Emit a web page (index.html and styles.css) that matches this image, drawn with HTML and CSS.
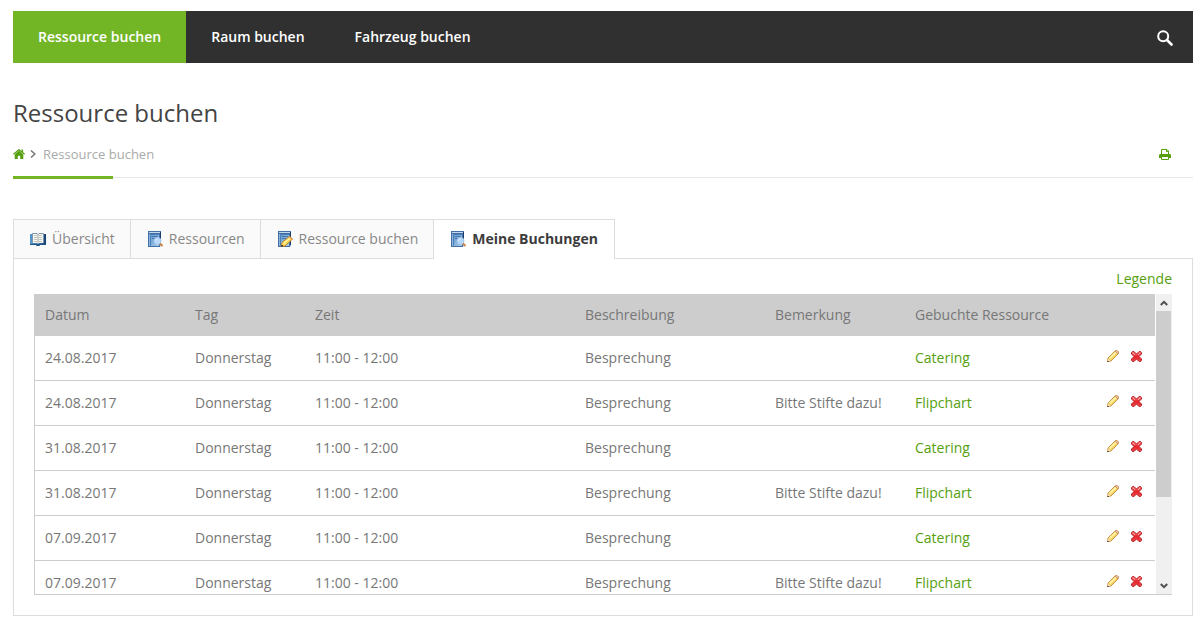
FILE: index.html
```html
<!DOCTYPE html>
<html lang="de">
<head>
<meta charset="utf-8">
<title>Ressource buchen</title>
<link rel="stylesheet" href="styles.css">
</head>
<body>
<svg class="sprite" aria-hidden="true">
  <defs>
    <linearGradient id="book-blue" x1="0" y1="0" x2="1" y2="1">
      <stop offset="0" stop-color="#5f97cc"/><stop offset="1" stop-color="#a9cbea"/>
    </linearGradient>
    <linearGradient id="cover-blue" x1="0" y1="0" x2="1" y2="0">
      <stop offset="0" stop-color="#5a9bd0"/><stop offset="1" stop-color="#173f70"/>
    </linearGradient>
    <linearGradient id="red-x" x1="0" y1="0" x2="0" y2="1">
      <stop offset="0" stop-color="#f47a7a"/><stop offset="0.5" stop-color="#e8242c"/><stop offset="1" stop-color="#e84848"/>
    </linearGradient>
  </defs>
  <symbol id="open-book" viewBox="0 0 16 16">
    <path d="M0 3h2v9h12V3h2v11H10l-1 1H7l-1-1H0z" fill="url(#cover-blue)"/>
    <path d="M0 13h16v1h-6l-1 1H7l-1-1H0z" fill="#1c568c"/>
    <path d="M2 2h5l1 1 1-1h5v10H9l-1 1-1-1H2z" fill="#f6f6f3"/>
    <path d="M2.500 12V2.500H7l1 1 1-1h4.500V12" fill="none" stroke="#7d96ad"/>
    <path d="M8 3v10" stroke="#a9a9a3" stroke-width="1"/>
    <path d="M4 4.500h3M4 6.500h3M4 8.500h3M9 4.500h3M9 6.500h3M9 8.500h3M4 10.500h3M9 10.500h3" stroke="#c4c4bf"/>
  </symbol>
  <symbol id="book" viewBox="0 0 16 16">
    <path d="M1 0h13v13l-1 3H1z" fill="#416fa6"/>
    <path d="M2 1h11v1H2z" fill="#c3d9ee"/>
    <path d="M2 3h1v12H2z" fill="#8eb4da"/>
    <path d="M3 3h9v12H3z" fill="url(#book-blue)"/>
    <path d="M3.500 14.500v-11h9" fill="none" stroke="#4a7fb8"/>
    <path d="M13.500 1v13" stroke="#1d3d69"/>
    <path d="M5 5.500h6M5 7.500h4" stroke="#4677ae"/>
  </symbol>
  <symbol id="book-search" viewBox="0 0 16 16">
    <use href="#book" width="16" height="16"/>
    <circle cx="10.500" cy="10" r="3.500" fill="#b9d8fa" stroke="#a3c8ee"/>
    <path d="M8.500 9.500a2 2 0 0 1 2-1.500" fill="none" stroke="#e4f2ff"/>
    <path d="M13 12.500l2.500 2.500" stroke="#d08c48" stroke-width="2"/>
  </symbol>
  <symbol id="book-edit" viewBox="0 0 16 16">
    <use href="#book" width="16" height="16"/>
    <path d="M4 15.500l1-4 7.500-6 3 2.500-7.500 7z" fill="#ffd95a" stroke="#c88624"/>
    <path d="M6.500 12.500L13 7" stroke="#fff3a5" stroke-width="1.500"/>
    <path d="M12 5.500l3.500 3" stroke="#df9b5c" stroke-width="1.500"/>
    <path d="M4 14h2v2H4z" fill="#5e4c36"/>
  </symbol>
  <symbol id="pencil" viewBox="0 0 12 12">
    <path d="M0.500 11.500L1 8 8 1 10 0.500 11.500 2 11 4 4 11z" fill="#f5d35d" stroke="#c8944a"/>
    <path d="M2.500 8.500L9 2.500" stroke="#fff0a2" stroke-width="2"/>
    <path d="M8 1l2-0.500L11.500 2 11 4z" fill="#f4d3b8" stroke="#cf9468"/>
    <path d="M1 8.500l2.500 2.500-3 0.500z" fill="#f3dfc0"/>
    <path d="M0 11h2v1H0z" fill="#705534"/>
  </symbol>
  <symbol id="delete" viewBox="0 0 11 11">
    <path d="M0.500 1.500l1-1H3l2.500 2.500L8 0.500h1.500l1 1V3L8 5.500l2.500 2.500v1.500l-1 1H8L5.500 8 3 10.500H1.500l-1-1V8L3 5.500 0.500 3z" fill="url(#red-x)" stroke="#b8292f"/>
    <path d="M2 2l2 2M9 2L7 4" stroke="#ffa5a2"/>
  </symbol>
</svg>

<div class="page">
  <header class="topbar">
    <nav class="mainnav">
      <a class="mainnav-link is-active" href="#">Ressource buchen</a>
      <a class="mainnav-link" href="#">Raum buchen</a>
      <a class="mainnav-link" href="#">Fahrzeug buchen</a>
    </nav>
    <button class="search" type="button" aria-label="Suchen">
      <svg width="16" height="16" viewBox="0 0 16 16"><circle cx="6.200" cy="6.200" r="5" fill="none" stroke="#fff" stroke-width="2"/><path d="M10 10l4.500 4.500" stroke="#fff" stroke-width="2.600" stroke-linecap="round"/></svg>
    </button>
  </header>

  <h1 class="title">Ressource buchen</h1>

  <div class="crumbs">
    <nav class="trail">
      <a class="crumb-home" href="#" aria-label="Startseite">
        <svg width="12" height="10" viewBox="0 0 12 10"><path d="M6 1.800L10.300 5.400V10H7.200V6.800H4.800V10H1.700V5.400z" fill="#56a010"/><path d="M0.400 5.300L6 0.700l5.600 4.600" fill="none" stroke="#56a010" stroke-width="1.200"/><path d="M8.500 0.500h1.600v3l-1.600-1.300z" fill="#56a010"/></svg>
      </a>
      <svg class="chevron" width="6" height="8" viewBox="0 0 6 8"><path d="M1 0.500L4.800 4 1 7.500" fill="none" stroke="#777" stroke-width="1.500"/></svg>
      <span>Ressource buchen</span>
    </nav>
    <button class="print" type="button" aria-label="Drucken">
      <svg width="12" height="11" viewBox="0 0 12 11"><path d="M2.500 5V0.500h5.500l1.500 1.500V5" fill="#fff" stroke="#56a010"/><path d="M7.500 0.500v2h2" fill="none" stroke="#56a010"/><path d="M1 5h10l1 1V9H0V6z" fill="#56a010"/><path d="M2.500 7.500h7v3h-7z" fill="#fff" stroke="#56a010"/></svg>
    </button>
  </div>

  <nav class="tabs">
    <a class="tab" href="#"><svg class="tab-icon"><use href="#open-book"/></svg>Übersicht</a>
    <a class="tab" href="#"><svg class="tab-icon"><use href="#book-search"/></svg>Ressourcen</a>
    <a class="tab" href="#"><svg class="tab-icon"><use href="#book-edit"/></svg>Ressource buchen</a>
    <a class="tab is-active" href="#" aria-current="page"><svg class="tab-icon"><use href="#book-search"/></svg>Meine Buchungen</a>
  </nav>

  <main class="panel">
    <div class="legend"><a href="#">Legende</a></div>
    <div class="list">
      <table class="bookings">
        <colgroup><col class="col-date"><col class="col-day"><col class="col-time"><col class="col-desc"><col class="col-note"><col><col class="col-actions"></colgroup>
        <thead>
          <tr><th>Datum</th><th>Tag</th><th>Zeit</th><th>Beschreibung</th><th>Bemerkung</th><th colspan="2">Gebuchte Ressource</th></tr>
        </thead>
        <tbody>
          <tr><td>24.08.2017</td><td>Donnerstag</td><td>11:00 - 12:00</td><td>Besprechung</td><td></td><td><a href="#">Catering</a></td><td><div class="actions"><button type="button" aria-label="Bearbeiten"><svg width="12" height="12"><use href="#pencil"/></svg></button><button type="button" aria-label="Löschen"><svg width="11" height="11"><use href="#delete"/></svg></button></div></td></tr>
          <tr><td>24.08.2017</td><td>Donnerstag</td><td>11:00 - 12:00</td><td>Besprechung</td><td>Bitte Stifte dazu!</td><td><a href="#">Flipchart</a></td><td><div class="actions"><button type="button" aria-label="Bearbeiten"><svg width="12" height="12"><use href="#pencil"/></svg></button><button type="button" aria-label="Löschen"><svg width="11" height="11"><use href="#delete"/></svg></button></div></td></tr>
          <tr><td>31.08.2017</td><td>Donnerstag</td><td>11:00 - 12:00</td><td>Besprechung</td><td></td><td><a href="#">Catering</a></td><td><div class="actions"><button type="button" aria-label="Bearbeiten"><svg width="12" height="12"><use href="#pencil"/></svg></button><button type="button" aria-label="Löschen"><svg width="11" height="11"><use href="#delete"/></svg></button></div></td></tr>
          <tr><td>31.08.2017</td><td>Donnerstag</td><td>11:00 - 12:00</td><td>Besprechung</td><td>Bitte Stifte dazu!</td><td><a href="#">Flipchart</a></td><td><div class="actions"><button type="button" aria-label="Bearbeiten"><svg width="12" height="12"><use href="#pencil"/></svg></button><button type="button" aria-label="Löschen"><svg width="11" height="11"><use href="#delete"/></svg></button></div></td></tr>
          <tr><td>07.09.2017</td><td>Donnerstag</td><td>11:00 - 12:00</td><td>Besprechung</td><td></td><td><a href="#">Catering</a></td><td><div class="actions"><button type="button" aria-label="Bearbeiten"><svg width="12" height="12"><use href="#pencil"/></svg></button><button type="button" aria-label="Löschen"><svg width="11" height="11"><use href="#delete"/></svg></button></div></td></tr>
          <tr><td>07.09.2017</td><td>Donnerstag</td><td>11:00 - 12:00</td><td>Besprechung</td><td>Bitte Stifte dazu!</td><td><a href="#">Flipchart</a></td><td><div class="actions"><button type="button" aria-label="Bearbeiten"><svg width="12" height="12"><use href="#pencil"/></svg></button><button type="button" aria-label="Löschen"><svg width="11" height="11"><use href="#delete"/></svg></button></div></td></tr>
        </tbody>
      </table>
      <div class="scrollbar">
        <button class="scroll-step" type="button" aria-label="Nach oben"><svg width="8" height="6" viewBox="0 0 8 6"><path d="M0.800 5L4 1.800 7.200 5" fill="none" stroke="#505050" stroke-width="2"/></svg></button>
        <div class="scroll-track"><div class="scroll-thumb"></div></div>
        <button class="scroll-step" type="button" aria-label="Nach unten"><svg width="8" height="6" viewBox="0 0 8 6"><path d="M0.800 1L4 4.200 7.200 1" fill="none" stroke="#505050" stroke-width="2"/></svg></button>
      </div>
    </div>
  </main>
</div>
</body>
</html>
```
FILE: styles.css
```css
* { box-sizing: border-box; }

body {
  margin: 0;
  background: #fff;
  color: #777;
  font: 14px/20px "Open Sans", "Noto Sans", sans-serif;
}

a { color: #56a010; text-decoration: none; }

button {
  display: flex;
  padding: 0;
  border: 0;
  background: none;
  cursor: pointer;
}

svg { display: block; flex: none; }

.sprite { position: absolute; width: 0; height: 0; }

.page { padding: 11px 11px 14px 13px; }

.topbar {
  display: flex;
  justify-content: space-between;
  align-items: center;
  background: #303030;
}

.mainnav { display: flex; }

.mainnav-link {
  padding: 16px 25px;
  color: #fff;
  font-weight: 600;
}

.mainnav-link.is-active { background: #72b626; }

.search { padding: 2px 20px 0; }

.title {
  margin: 34px 0 0;
  color: #444;
  font-size: 24px;
  line-height: 32px;
  font-weight: 400;
}

.crumbs {
  position: relative;
  display: flex;
  justify-content: space-between;
  align-items: center;
  margin-top: 15px;
  padding-bottom: 13px;
  border-bottom: 1px solid #e6e6e6;
  font-size: 13px;
}

.crumbs::after {
  content: "";
  position: absolute;
  left: 0;
  bottom: -2px;
  width: 100px;
  height: 3px;
  background: #72b626;
}

.trail { display: flex; align-items: center; color: #aaa; }

.chevron { margin: 0 7px 0 5px; }

.print { padding: 0 22px; }

.tabs { display: flex; margin-top: 41px; }

.tab {
  display: flex;
  align-items: center;
  gap: 6px;
  padding: 9px 15px 9px 16px;
  border: 1px solid #ddd;
  border-right: 0;
  border-bottom: 0;
  background: #fafafa;
  color: #888;
}

.tab-icon { width: 16px; height: 16px; }

.tab.is-active {
  z-index: 1;
  margin-bottom: -1px;
  padding-right: 16px;
  padding-bottom: 10px;
  border-right: 1px solid #ddd;
  background: #fff;
  color: #3c3c3c;
  font-weight: 700;
}

.panel {
  padding: 10px 20px 20px;
  border: 1px solid #ddd;
}

.legend { padding-bottom: 5px; text-align: right; }

.list {
  display: flex;
  align-items: flex-start;
  max-height: 301px;
  overflow: hidden;
  border-left: 1px solid #cdcdcd;
  border-bottom: 1px solid #cdcdcd;
}

.bookings {
  flex: 1;
  table-layout: fixed;
  border-collapse: collapse;
}

.col-date { width: 150px; }
.col-day { width: 120px; }
.col-time { width: 270px; }
.col-desc { width: 190px; }
.col-note { width: 140px; }
.col-actions { width: 58px; }

.bookings th {
  padding: 11px 10px;
  background: #cdcdcd;
  font-weight: 400;
  text-align: left;
}

.bookings td {
  padding: 12px 10px;
  border-bottom: 1px solid #cdcdcd;
}

.actions {
  display: flex;
  align-items: center;
  gap: 12px;
  padding-bottom: 4px;
}

.scrollbar {
  display: flex;
  flex-direction: column;
  width: 16px;
  height: 300px;
  margin-left: 1px;
  background: #f0f0f0;
}

.scroll-step {
  flex: none;
  align-items: center;
  justify-content: center;
  height: 17px;
}

.scroll-track { flex: 1; padding-right: 1px; }

.scroll-thumb { height: 70%; background: #cdcdcd; }
```
